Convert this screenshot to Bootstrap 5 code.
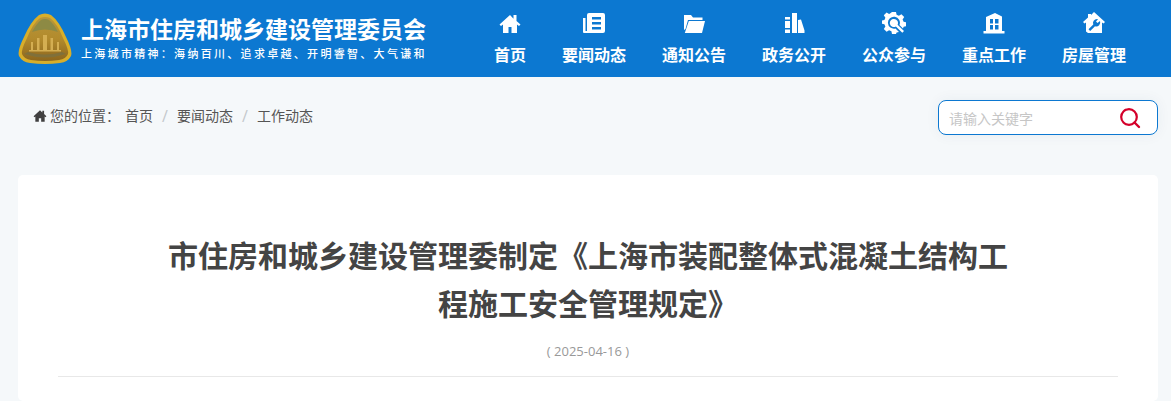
<!DOCTYPE html>
<html lang="zh-CN">
<head>
  <meta charset="UTF-8">
  <title>市住房和城乡建设管理委制定《上海市装配整体式混凝土结构工程施工安全管理规定》</title>
  <meta name="viewport" content="width=device-width, initial-scale=1">
  <link href="https://cdn.jsdelivr.net/npm/bootstrap@5.3.3/dist/css/bootstrap.min.css" rel="stylesheet">
  <script src="https://cdn.jsdelivr.net/npm/bootstrap@5.3.3/dist/js/bootstrap.bundle.min.js"></script>
  <style>
    html, body {
      height: 401px;
      overflow: hidden;
    }
    body {
      background-color: #f5f8fa;
      font-family: "Open Sans", "Noto Sans CJK SC", sans-serif;
      color: #404040;
    }
    .top-bar {
      height: 77px;
      background-color: #0c78d1;
      padding: 0 27px 0 18px;
    }
    .site-logo {
      width: 54px;
      height: 52px;
      margin-right: 9px;
      margin-top: 1px;
    }
    .site-name {
      font-size: 23px;
      font-weight: 700;
      line-height: 30px;
      color: #fff;
      white-space: nowrap;
      margin-top: -2px;
    }
    .site-motto {
      font-size: 11px;
      line-height: 16px;
      letter-spacing: 2.3px;
      color: #fff;
      font-weight: 500;
      margin-top: 2px;
      white-space: nowrap;
    }
    .main-nav-item {
      padding: 0 18px;
      color: #fff;
      text-decoration: none;
      font-size: 16px;
      font-weight: 700;
      line-height: 22px;
      white-space: nowrap;
    }
    .main-nav-item svg {
      width: 24px;
      height: 24px;
      display: block;
      margin: -1px auto 10px;
      fill: #fff;
    }
    .crumb-row {
      height: 98px;
      padding: 23px 13px 0 33px;
    }
    .crumb-line {
      font-size: 14px;
      line-height: 32px;
      color: #555;
    }
    .crumb-line svg {
      width: 14px;
      height: 14px;
      fill: #404040;
      margin-right: 3px;
    }
    .crumb-line a {
      color: #555;
      text-decoration: none;
    }
    .crumb-sep {
      color: #c4c8cc;
      font-size: 16px;
      margin: 0 8px;
      width: 8px;
      text-align: center;
    }
    .crumb-label {
      margin-right: 5px;
    }
    .search-box {
      width: 220px;
      height: 35px;
      border: 1px solid #0c78d1;
      border-radius: 8px;
      background-color: #fff;
      padding: 0 16px 0 10px;
      box-shadow: 0 0 14px rgba(40, 70, 100, .06);
    }
    .search-box input {
      border: 0;
      outline: 0;
      padding: 2px 0 0;
      width: 150px;
      font-size: 14px;
      background: transparent;
    }
    .search-box input::placeholder {
      color: #c6c6c6;
      opacity: 1;
    }
    .search-box svg {
      width: 22px;
      height: 22px;
    }
    .article-sheet {
      margin: 0 13px 0 18px;
      padding: 57px 40px 0;
      background-color: #fff;
      border-radius: 5px;
      height: 226px;
    }
    .article-title {
      font-size: 30px;
      font-weight: 700;
      line-height: 48px;
      color: #444;
      margin: 0 auto;
      width: 860px;
      text-align: center;
    }
    .article-date {
      font-size: 13px;
      line-height: 18px;
      color: #999;
      text-align: center;
      margin-top: 14px;
      padding-bottom: 16px;
      border-bottom: 1px solid #e8e8e8;
    }
  </style>
</head>
<body>
  <!-- 顶部 -->
  <header class="top-bar d-flex align-items-center justify-content-between">
    <div class="d-flex align-items-center">
      <svg class="site-logo" viewBox="0 0 54 52">
        <defs>
          <linearGradient id="gold" x1="0" y1="0" x2="0" y2="1">
            <stop offset="0" stop-color="#b8963a"/>
            <stop offset=".5" stop-color="#b28a2c"/>
            <stop offset="1" stop-color="#8c661e"/>
          </linearGradient>
        </defs>
        <path d="M21 2 Q27 -1 33 2 Q41 8 48 24 Q55 38 53 43 Q50 49 42 50 Q27 52 12 50 Q4 49 1 43 Q-1 38 6 24 Q13 8 21 2Z" fill="#d8ae2a"/>
        <path d="M22 5 Q27 3 32 5 Q39 10 45 25 Q51 37 50 41 Q48 46 41 47 Q27 49 13 47 Q6 46 4 41 Q3 37 9 25 Q15 10 22 5Z" fill="url(#gold)"/>
        <path d="M23 7 Q27 5 31 7 Q36 11 40 19 Q27 14 14 19 Q18 11 23 7Z" fill="#8d8a44"/>
        <path d="M6 41 Q27 48 48 41 L44 39 Q27 44 10 39Z" fill="#80703a"/>
        <path d="M13 37 V29 H15 V37Z M19 37 V25 H21.500 V37Z M25 37 V22 H29 V37Z M32.500 37 V25 H35 V37Z M39 37 V29 H41 V37Z M11 37 H43 V38.500 H11Z" fill="#d4ae52"/>
      </svg>
      <div>
        <div class="site-name">上海市住房和城乡建设管理委员会</div>
        <div class="site-motto">上海城市精神：海纳百川、追求卓越、开明睿智、大气谦和</div>
      </div>
    </div>
    <nav class="d-flex">
      <a class="main-nav-item text-center" href="#">
        <svg viewBox="0 0 24 24"><path fill-rule="evenodd" d="M12 5 1.500 14.500 3 16l2-1.500V23h5.500v-6h3v6H19v-8.500l2 1.500 1.500-1.500-4-3.600V5h-3v3.800z"/></svg>
        首页
      </a>
      <a class="main-nav-item text-center" href="#">
        <svg viewBox="0 0 24 24"><path fill-rule="evenodd" d="M7 3h14a2 2 0 0 1 2 2v16a2 2 0 0 1-2 2H2a1 1 0 0 1-1-1V8h2.500v13H5V5a2 2 0 0 1 2-2zm3 4v2.500h9V7zm0 5v2.500h9V12zm0 5v2.500h9V17z"/></svg>
        要闻动态
      </a>
      <a class="main-nav-item text-center" href="#">
        <svg viewBox="0 0 24 24"><path d="M2 5h7l2 2.500h9.500V10H6l-2.500 9L2 20zM6.800 11H23l-3 12H2.800z"/></svg>
        通知公告
      </a>
      <a class="main-nav-item text-center" href="#">
        <svg viewBox="0 0 24 24"><path d="M3 7h5v2.500H3zM3 11h5v7H3zM3 19.500h5V23H3zM10 3h5v20h-5zM16 10l3-.5 3.500 11v2.500H16z"/></svg>
        政务公开
      </a>
      <a class="main-nav-item text-center" href="#">
        <svg viewBox="0 0 24 24"><path fill-rule="evenodd" d="M10 2h4l.6 2.800 2.300 1 2.500-1.600 2.800 2.800-1.600 2.500 1 2.300 2.900.6v3.800l-2.900.6-.6 1.600-3.500-3.500A6 6 0 1 0 13.500 18.500l3.500 3.500-2.400.5-.6 1.500h-4l-.6-2.800-2.300-1-2.500 1.600-2.800-2.800 1.600-2.500-1-2.300-2.900-.6V10.600l2.900-.6 1-2.300-1.600-2.500 2.800-2.800 2.500 1.600.9-.4zM12 9a4 4 0 0 1 3.600 5.700l6.400 6.300-1.700 1.700-6.400-6.300A4 4 0 1 1 12 9z"/></svg>
        公众参与
      </a>
      <a class="main-nav-item text-center" href="#">
        <svg viewBox="0 0 24 24"><path fill-rule="evenodd" d="M4 7 13 3l7 3.500V21h2.500v2.500h-21V21H4zM8 9v4.500h3V9zm0 6v4.500h3V15zm5-6v4.500h3.500V9zm0 6v4.500h3.500V15z"/></svg>
        重点工作
      </a>
      <a class="main-nav-item text-center" href="#">
        <svg viewBox="0 0 24 24"><path fill-rule="evenodd" d="M12 2 23 12l-1.500 1.500L20 12.500V23H6l-2-1.500v-9L2.500 13.500 1 12l5-4.500V4h3v1zM15 9a4 4 0 0 0-3.700 5.500L6.500 19.300l1.700 1.700 4.800-4.800A4 4 0 0 0 18 11l-2.500 2L14 11.500l2-2.200A4 4 0 0 0 15 9z"/></svg>
        房屋管理
      </a>
    </nav>
  </header>

  <!-- 面包屑和搜索 -->
  <div class="crumb-row d-flex justify-content-between align-items-start">
    <div class="crumb-line d-flex align-items-center">
      <svg viewBox="0 0 24 24"><path d="M12 2 1 12.500l1.600 1.700L4 13v9h6v-6h4v6h6v-9l1.400 1.200 1.600-1.700L19 8.700V3h-3v2.800z"/></svg>
      <span class="crumb-label">您的位置：</span>
      <a href="#">首页</a><span class="crumb-sep">/</span>
      <a href="#">要闻动态</a><span class="crumb-sep">/</span>
      <a href="#">工作动态</a>
    </div>
    <div class="search-box d-flex align-items-center justify-content-between">
      <input type="text" placeholder="请输入关键字">
      <svg viewBox="0 0 22 22"><circle cx="10" cy="10" r="7.800" fill="none" stroke="#d4002a" stroke-width="2.200"/><path d="M15.500 15.500 20 20" stroke="#d4002a" stroke-width="2.400" stroke-linecap="round"/></svg>
    </div>
  </div>

  <!-- 正文 -->
  <main class="article-sheet">
    <h1 class="article-title">市住房和城乡建设管理委制定《上海市装配整体式混凝土结构工程施工安全管理规定》</h1>
    <div class="article-date">( 2025-04-16 )</div>
  </main>
</body>
</html>
